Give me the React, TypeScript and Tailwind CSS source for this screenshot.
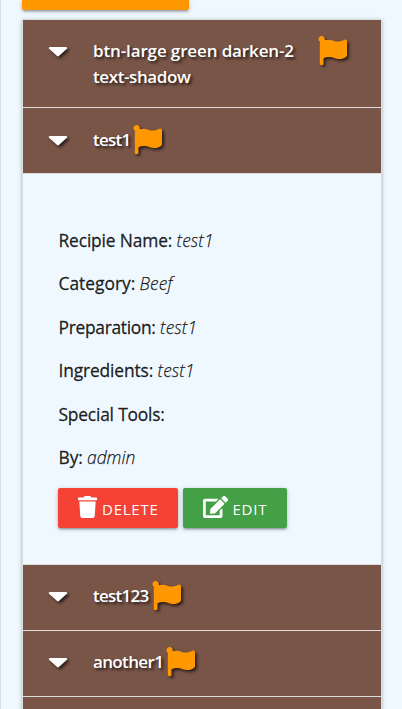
import type { ReactNode } from 'react';
import { FaCaretDown, FaEdit, FaFlag, FaTrash } from 'react-icons/fa';

const iconShadow = '[filter:drop-shadow(2px_2px_1.5px_rgba(0,0,0,0.65))]';

function Header({ title, height, titleClass }: { title: ReactNode; height: string; titleClass: string }) {
  return (
    <div className={`flex items-start border-b border-[#ddd] bg-[#795548] pl-[25px] ${height}`}>
      <FaCaretDown className={`mt-[2px] h-[29px] w-[20px] shrink-0 text-white ${iconShadow}`} preserveAspectRatio="none" />
      <div
        className={`ml-[25px] mt-1 whitespace-nowrap text-[17px] font-semibold leading-[26px] text-white [text-shadow:2px_2px_3px_rgba(0,0,0,0.7)] ${titleClass}`}
      >
        {title}
      </div>
      <FaFlag className={`ml-[1.5px] mt-[2px] size-[29px] shrink-0 text-[#ff9800] ${iconShadow}`} />
    </div>
  );
}

function Detail({ label, labelClass, value, valueClass }: { label: string; labelClass: string; value?: string; valueClass?: string }) {
  return (
    <p className="flex gap-[5px] whitespace-nowrap text-[17.4px] leading-[26.1px]">
      <span className={`[-webkit-text-stroke:0.3px_currentColor] ${labelClass}`}>{label}</span>
      {value && <em className={`font-light [-webkit-text-stroke:0.25px_currentColor] ${valueClass}`}>{value}</em>}
    </p>
  );
}

export default function App() {
  return (
    <div className="h-[709px] w-full overflow-hidden border-l border-[#ddd] bg-[#f0f8ff] pl-[21px] font-['Open_Sans','Noto_Sans',sans-serif] text-[rgba(0,0,0,0.87)]">
      <div className="h-[10px] w-[167px] rounded-b-[2px] bg-[#ff9800] shadow-[0_2px_2px_0_rgba(0,0,0,0.14),0_3px_1px_-2px_rgba(0,0,0,0.12),0_1px_5px_0_rgba(0,0,0,0.2)]" />
      <div className="mt-[9px] w-[360px] border border-[#ddd] shadow-[0_2px_2px_0_rgba(0,0,0,0.14),0_3px_1px_-2px_rgba(0,0,0,0.12),0_1px_5px_0_rgba(0,0,0,0.2)]">
        <Header
          title={<>btn-large green darken-2<br /><span className="tracking-[-0.4px]">text-shadow</span></>}
          height="h-[88px] pt-[14px]"
          titleClass="w-[223px] tracking-[-0.13px]"
        />
        <Header title="test1" height="h-[66px] pt-[15px]" titleClass="w-[38px] tracking-[-0.75px]" />
        <div className="h-[391px] border-b border-[#ddd] px-[35px] pt-[53px]">
          <div className="flex flex-col gap-[17.4px] pl-[0.5px]">
            <Detail label="Recipie Name:" labelClass="w-[113px] tracking-[-0.15px]" value="test1" valueClass="tracking-[0.1px]" />
            <Detail label="Category:" labelClass="w-[76px] tracking-[0px]" value="Beef" valueClass="tracking-[0.1px]" />
            <Detail label="Preparation:" labelClass="w-[96.5px] tracking-[-0.3px]" value="test1" valueClass="tracking-[0.1px]" />
            <Detail label="Ingredients:" labelClass="w-[94px] tracking-[-0.15px]" value="test1" valueClass="tracking-[0.1px]" />
            <Detail label="Special Tools:" labelClass="tracking-[-0.2px]" />
            <Detail label="By:" labelClass="w-[23.5px] tracking-[-0.1px]" value="admin" valueClass="tracking-[0px]" />
          </div>
          <div className="mt-[17px] flex gap-[5px] text-[15px] text-white">
            <button className="flex h-[40px] w-[120px] rounded-[2px] bg-[#f44336] pl-5 shadow-[0_2px_2px_0_rgba(0,0,0,0.14),0_3px_1px_-2px_rgba(0,0,0,0.12),0_1px_5px_0_rgba(0,0,0,0.2)]">
              <FaTrash className="mt-2 h-[22px] w-[19px]" preserveAspectRatio="none" />
              <span className="ml-[5px] leading-[42px] tracking-[0.75px]">DELETE</span>
            </button>
            <button className="flex h-[40px] w-[104px] rounded-[2px] bg-[#43a047] pl-[19.5px] shadow-[0_2px_2px_0_rgba(0,0,0,0.14),0_3px_1px_-2px_rgba(0,0,0,0.12),0_1px_5px_0_rgba(0,0,0,0.2)]">
              <FaEdit className="mt-2 h-[22px] w-[25px]" preserveAspectRatio="none" />
              <span className="ml-[5px] leading-[42px] tracking-[0.75px]">EDIT</span>
            </button>
          </div>
        </div>
        <Header title="test123" height="h-[66px] pt-[14px]" titleClass="w-[57px] tracking-[-0.75px]" />
        <Header title="another1" height="h-[66px] pt-[14px]" titleClass="w-[71px] tracking-[-0.65px]" />
        <div className="h-[66px] bg-[#795548]" />
      </div>
    </div>
  );
}
